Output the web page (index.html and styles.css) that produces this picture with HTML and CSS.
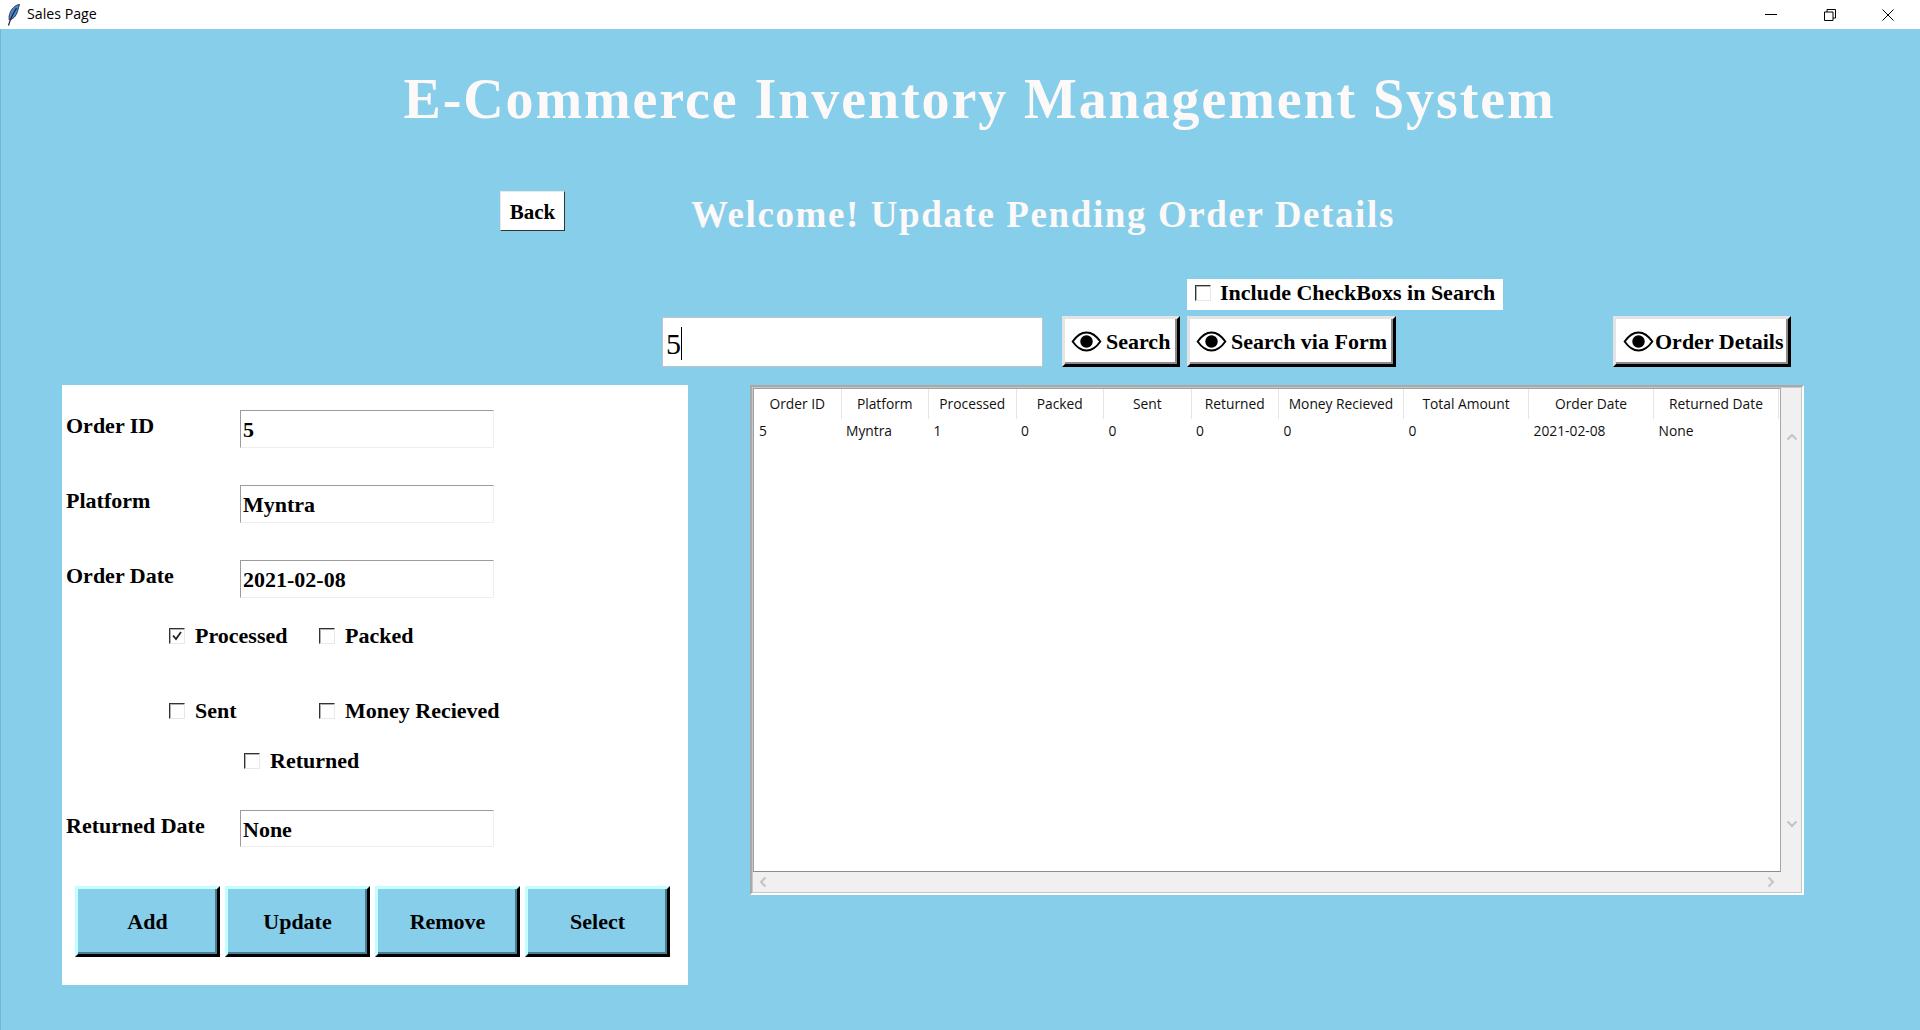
FILE: index.html
```html
<!DOCTYPE html>
<html lang="en">
<head>
  <meta charset="UTF-8">
  <meta name="viewport" content="width=device-width, initial-scale=1.0">
  <title>Sales Page</title>
  <link rel="stylesheet" href="styles.css">
</head>
<body>
  <div class="titlebar">
    <svg class="feather" width="14" height="22" viewBox="0 0 14 22">
      <path d="M13.500 .5C9 1 5 5 3.500 10.500c-.6 2.200-.6 3.800-.2 5.500 4-1 7-4 8.200-8.500.6-2.500 1.300-5 2-7z" fill="#4a86cf" stroke="#2b3d5c" stroke-width="1"/>
      <path d="M10.500 4C7.500 9 4.500 14 2.500 21.500" fill="none" stroke="#1c2431" stroke-width="1.300"/>
    </svg>
    <span class="titlebar-text">Sales Page</span>
    <div class="window-controls">
      <svg width="12" height="12" viewBox="0 0 12 12"><path d="M0 5.500h12" stroke="#000" fill="none"/></svg>
      <svg width="12" height="12" viewBox="0 0 12 12"><path d="M.5 3h8.500v8.500H.5zM3 3V.5h8.500V9H9" stroke="#000" fill="none"/></svg>
      <svg width="12" height="12" viewBox="0 0 12 12"><path d="M.5.5l11 11M11.500.5l-11 11" stroke="#000" fill="none"/></svg>
    </div>
  </div>

  <main class="window">
    <h1>E-Commerce Inventory Management System</h1>

    <div class="back-row">
      <button class="btn-back">Back</button>
      <h2>Welcome! Update Pending Order Details</h2>
    </div>

    <div class="include-row">
      <span class="box"></span>
      <span>Include CheckBoxs in Search</span>
    </div>

    <div class="search-row">
      <div class="search-entry"><span class="caret">5</span></div>
      <button class="btn-eye btn-search">
        <svg class="eye" viewBox="0 0 32 22"><path d="M1.500 11C6 4.500 11 1.500 16 1.500S26 4.500 30.500 11C26 17.500 21 20.500 16 20.500S6 17.500 1.500 11z" fill="none" stroke="#000" stroke-width="2"/><circle cx="16" cy="11" r="6.500" fill="#000"/></svg>Search
      </button>
      <button class="btn-eye btn-form">
        <svg class="eye" viewBox="0 0 32 22"><path d="M1.500 11C6 4.500 11 1.500 16 1.500S26 4.500 30.500 11C26 17.500 21 20.500 16 20.500S6 17.500 1.500 11z" fill="none" stroke="#000" stroke-width="2"/><circle cx="16" cy="11" r="6.500" fill="#000"/></svg>Search via Form
      </button>
      <button class="btn-eye btn-details">
        <svg class="eye" viewBox="0 0 32 22"><path d="M1.500 11C6 4.500 11 1.500 16 1.500S26 4.500 30.500 11C26 17.500 21 20.500 16 20.500S6 17.500 1.500 11z" fill="none" stroke="#000" stroke-width="2"/><circle cx="16" cy="11" r="6.500" fill="#000"/></svg>Order Details
      </button>
    </div>

    <div class="content">
      <section class="form-panel">
        <div class="field">
          <label>Order ID</label>
          <div class="entry">5</div>
        </div>
        <div class="field">
          <label>Platform</label>
          <div class="entry">Myntra</div>
        </div>
        <div class="field field-last">
          <label>Order Date</label>
          <div class="entry">2021-02-08</div>
        </div>

        <div class="checks checks-1">
          <div class="check"><span class="box"><svg width="10" height="10" viewBox="0 0 10 10"><path d="M1 4.500l3 3.500 5-7" fill="none" stroke="#222" stroke-width="1.800"/></svg></span>Processed</div>
          <div class="check"><span class="box"></span>Packed</div>
        </div>
        <div class="checks checks-2">
          <div class="check"><span class="box"></span>Sent</div>
          <div class="check"><span class="box"></span>Money Recieved</div>
        </div>
        <div class="checks checks-3">
          <div class="check"><span class="box"></span>Returned</div>
        </div>

        <div class="field field-returned">
          <label>Returned Date</label>
          <div class="entry">None</div>
        </div>

        <div class="actions">
          <button>Add</button>
          <button>Update</button>
          <button>Remove</button>
          <button>Select</button>
        </div>
      </section>

      <section class="tree-frame">
        <div class="tree-top">
          <div class="tree">
            <table>
              <thead>
                <tr>
                  <th class="first">Order ID</th><th>Platform</th><th>Processed</th><th>Packed</th><th>Sent</th><th>Returned</th>
                  <th class="wide">Money Recieved</th><th class="wide">Total Amount</th><th class="wide">Order Date</th><th class="wide">Returned Date</th>
                </tr>
              </thead>
              <tbody>
                <tr>
                  <td>5</td><td>Myntra</td><td>1</td><td>0</td><td>0</td><td>0</td><td>0</td><td>0</td><td>2021-02-08</td><td>None</td>
                </tr>
              </tbody>
            </table>
          </div>
          <div class="vbar">
            <svg width="12" height="8" viewBox="0 0 12 8"><path d="M1.500 6.500L6 2l4.500 4.500" fill="none" stroke="#c4c4c4" stroke-width="2"/></svg>
            <svg width="12" height="8" viewBox="0 0 12 8"><path d="M1.500 1.500L6 6l4.500-4.500" fill="none" stroke="#c4c4c4" stroke-width="2"/></svg>
          </div>
        </div>
        <div class="hbar">
          <svg width="8" height="12" viewBox="0 0 8 12"><path d="M6.500 1.500L2 6l4.500 4.500" fill="none" stroke="#c4c4c4" stroke-width="2"/></svg>
          <svg width="8" height="12" viewBox="0 0 8 12"><path d="M1.500 1.500L6 6l-4.500 4.500" fill="none" stroke="#c4c4c4" stroke-width="2"/></svg>
        </div>
      </section>
    </div>
  </main>
</body>
</html>
```

FILE: styles.css
```css
* {
  box-sizing: border-box;
}
body {
  margin: 0;
  width: 1920px;
  height: 1030px;
  overflow: hidden;
  background: #87ceeb;
  font-family: "Liberation Serif", serif;
  color: #000;
}
button {
  font-family: inherit;
  color: #000;
  padding: 0;
  cursor: pointer;
}

/* title bar */
.titlebar {
  height: 29px;
  background: #fff;
  display: flex;
  align-items: center;
  padding-left: 6px;
}
.titlebar-text {
  font-family: "Open Sans", sans-serif;
  font-size: 14.200px;
  margin: 0 0 2px 7px;
}
.window-controls {
  margin-left: auto;
  padding-right: 26px;
  display: flex;
  gap: 46.500px;
}

.window {
  height: 1001px;
  border-left: 1px solid #76b6d0;
}
h1 {
  margin: 0;
  height: 140px;
  line-height: 140px;
  padding-left: 38px;
  text-align: center;
  color: #fcf9f8;
  font-size: 56px;
  letter-spacing: 1.9px;
}

.back-row {
  margin-top: 22px;
  height: 40px;
  padding-left: 499px;
  display: flex;
  align-items: center;
}
.btn-back {
  width: 65px;
  height: 40px;
  background: #fff;
  border: 1px solid;
  border-color: #e8e8e8 #333 #333 #e8e8e8;
  padding-top: 2px;
  font-size: 21px;
  font-weight: bold;
}
h2 {
  margin: 6px 0 0 126px;
  color: #fcf9f8;
  font-size: 37px;
  letter-spacing: 1.6px;
  white-space: nowrap;
}

.include-row {
  margin: 48px 0 0 1186px;
  width: 316px;
  height: 31px;
  background: #fff;
  display: flex;
  align-items: center;
  gap: 9px;
  padding: 0 0 3px 8px;
  font-size: 22px;
  font-weight: bold;
}

.box {
  width: 16px;
  height: 16px;
  flex: none;
  background: #fff;
  border: 1px solid;
  border-color: #333 #e8e8e8 #e8e8e8 #333;
  box-shadow: inset 1px 1px 0 #b0b0b0;
  display: flex;
  align-items: center;
  justify-content: center;
}

.search-row {
  margin: 6px 0 0 661px;
  height: 51px;
  display: flex;
}
.search-entry {
  width: 381px;
  height: 50px;
  margin-top: 1px;
  background: #fff;
  border: 1px solid #b9c6cc;
  padding: 6px 0 0 3px;
  font-size: 30px;
  line-height: 40px;
}
.caret {
  border-right: 1px solid #000;
}
.btn-eye {
  height: 51px;
  background: #fff;
  border: 3px solid;
  border-color: #e4e4e4 #000 #000 #e4e4e4;
  box-shadow: inset -2px -2px 0 #8c8c8c;
  font-size: 22px;
  font-weight: bold;
  display: flex;
  align-items: center;
  padding: 0 0 0 6px;
  white-space: nowrap;
}
.eye {
  width: 31px;
  height: 21px;
  flex: none;
  margin-right: 4px;
}
.btn-search {
  width: 118px;
  margin-left: 19px;
}
.btn-form {
  width: 209px;
  margin-left: 7px;
}
.btn-details {
  width: 178px;
  margin-left: 217px;
  padding-left: 7px;
}
.btn-details .eye {
  margin-right: 1px;
}

.content {
  margin: 18px 0 0 61px;
  display: flex;
  align-items: flex-start;
  gap: 62px;
}

/* left form */
.form-panel {
  width: 626px;
  height: 600px;
  background: #fff;
  padding-top: 25px;
  font-size: 22px;
  font-weight: bold;
}
.field {
  height: 38px;
  margin-bottom: 37px;
  display: flex;
  align-items: center;
}
.field label {
  width: 178px;
  padding: 0 0 6px 4px;
}
.entry {
  width: 254px;
  height: 38px;
  border: 1px solid;
  border-color: #9c9c9c #eee #eee #9c9c9c;
  padding: 2px 0 0 2px;
  font-size: 22px;
  line-height: 34px;
}
.field-last {
  margin-bottom: 30px;
}
.field-returned {
  margin: 41px 0 39px;
  height: 37px;
}
.field-returned .entry {
  height: 37px;
}
.checks {
  height: 16px;
  display: grid;
  grid-template-columns: 150px auto;
  padding-left: 107px;
}
.checks-1 {
  margin-bottom: 59px;
}
.checks-2 {
  margin-bottom: 34px;
}
.checks-3 {
  padding-left: 182px;
}
.check {
  display: flex;
  align-items: center;
  gap: 10px;
  line-height: 16px;
  white-space: nowrap;
}
.actions {
  padding-left: 13px;
  display: flex;
  gap: 5px;
}
.actions button {
  width: 145px;
  height: 71px;
  background: #87ceeb;
  border: 3px solid;
  border-color: #c3ffff #000 #000 #c3ffff;
  box-shadow: inset -2px -2px 0 #4a7f92;
  font-size: 22px;
  font-weight: bold;
}

/* treeview */
.tree-frame {
  width: 1054px;
  height: 510px;
  background: #f0f0f0;
  border: 2px solid;
  border-color: #a9a9a9 #fff #fff #a9a9a9;
  outline: 1px solid #c8c8c8;
  outline-offset: -3px;
  font-family: "Open Sans", sans-serif;
  font-size: 13.800px;
  color: #111;
}
.tree-top {
  display: flex;
  height: 485px;
}
.tree {
  width: 1028px;
  height: 484px;
  margin: 1px 0 0 1px;
  background: #fff;
  border: 1px solid;
  border-color: #a0a0a0 #a6a6b0 #8c8c98 #a0a0a0;
}
table {
  border-collapse: collapse;
  table-layout: fixed;
  width: 1024.500px;
}
th {
  width: 87.500px;
  height: 30px;
  padding: 0 0 2px;
  font-weight: normal;
  border-right: 1px solid #e5e5e5;
}
th.first {
  width: 87px;
}
th.wide {
  width: 125px;
}
td {
  height: 24px;
  padding: 0 0 2px 5px;
}
.vbar {
  width: 21px;
  padding: 46px 0 44px;
  display: flex;
  flex-direction: column;
  align-items: center;
  justify-content: space-between;
}
.hbar {
  height: 20px;
  display: flex;
  align-items: center;
  justify-content: space-between;
  padding: 0 27px 0 7px;
}
```
